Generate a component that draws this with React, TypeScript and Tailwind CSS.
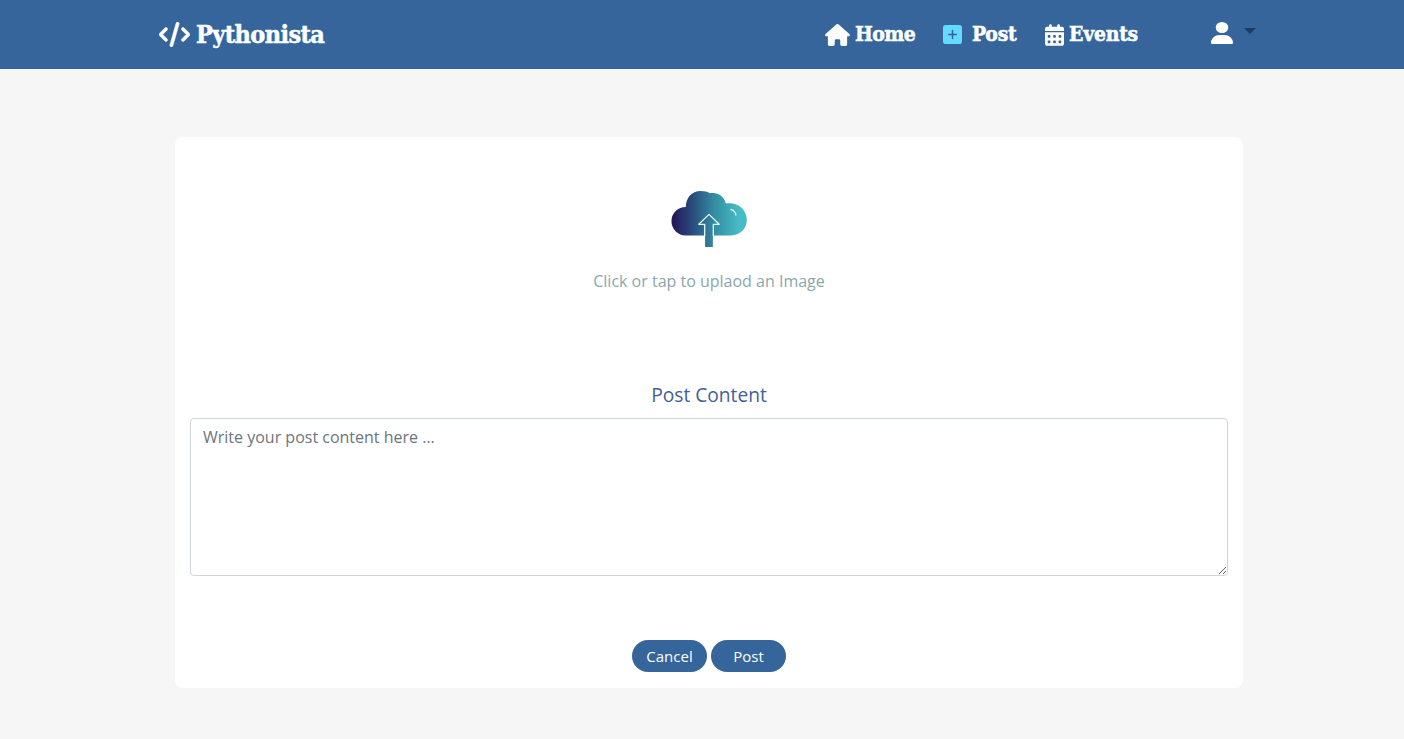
import { FaCalendarDays, FaCode, FaHouse, FaUser } from "react-icons/fa6";

const brandFont =
  "font-['DejaVu_Serif_Condensed','DejaVu_Serif',serif] font-bold text-white [-webkit-text-stroke:0.5px_white]";

function PlusIcon() {
  return (
    <svg width="19" height="19" viewBox="0 0 19 19" className="block">
      <rect width="19" height="19" rx="2.8" fill="#63dafe" />
      <path d="M9.5 5.6v7.8M5.6 9.5h7.8" stroke="#2f6399" strokeWidth="1.5" strokeLinecap="round" />
    </svg>
  );
}

function UploadCloud() {
  return (
    <svg width="76" height="58" viewBox="0 0 76 58" className="block">
      <defs>
        <linearGradient id="cloud" x1="0" x2="76" y1="0" y2="0" gradientUnits="userSpaceOnUse">
          <stop offset="0.03" stopColor="#25175a" />
          <stop offset="0.28" stopColor="#294b7c" />
          <stop offset="0.58" stopColor="#358ea5" />
          <stop offset="0.9" stopColor="#45bdc6" />
        </linearGradient>
      </defs>
      <path
        d="M14.6 45.4A14.25 14.25 0 0 1 14.8 16.9C14.8 8 20.8 1 29.5 1C33.5 1 36.7 1.9 39 3.3C45.5 1.6 53 5.2 54.9 13.5C66.5 11.4 75.8 19.5 75.8 29.8C75.8 38.8 69 45.4 60 45.4Z"
        fill="url(#cloud)"
      />
      <path d="M33 44h9.6v3.5H33z" fill="white" />
      <path d="M34.1 57V34H28L38 24.4 48 34h-6.1v23z" fill="url(#cloud)" />
      <path d="M33.7 46V34.3h-5.9L38 24.4l10.2 9.9h-5.9V46" fill="none" stroke="#e2f8fc" strokeWidth="1.3" strokeLinejoin="round" />
      <path d="M60 19.5q2.7.4 4 3M64.6 23.2l.2 1.8" fill="none" stroke="#d5f8fa" strokeWidth="1.3" strokeLinecap="round" />
    </svg>
  );
}

export default function App() {
  return (
    <div className="h-[739px] w-[1404px] overflow-hidden bg-[#f6f6f6] font-['Open_Sans',sans-serif] text-base">
      <nav className="flex h-[69px] items-center bg-[#35659b] pl-[159px]">
        <a href="#" className="flex w-[666px] items-center">
          <FaCode className="h-[25px] w-[31px] stroke-white stroke-[12px] text-white" />
          <span className={`${brandFont} ml-[6px] text-[25px] leading-8 tracking-[-0.6px]`}>Pythonista</span>
        </a>
        <a href="#" className="flex w-[118px] items-center">
          <FaHouse className="h-[22px] w-[25px] text-white" />
          <span className={`${brandFont} ml-[5px] pb-0.5 text-[21px] leading-8 tracking-[-0.55px]`}>Home</span>
        </a>
        <a href="#" className="flex w-[102px] items-center">
          <PlusIcon />
          <span className={`${brandFont} ml-[10px] pb-0.5 text-[21px] leading-8 tracking-[-0.3px]`}>Post</span>
        </a>
        <a href="#" className="flex w-[166px] items-center">
          <FaCalendarDays className="h-[22px] w-[19px] text-white" />
          <span className={`${brandFont} ml-[5px] pb-0.5 text-[21px] leading-8 tracking-[-0.25px]`}>Events</span>
        </a>
        <button aria-label="Account" className="flex items-center pb-[3px]">
          <FaUser preserveAspectRatio="none" className="h-[22px] w-[22px] text-white" />
          <svg width="12" height="6" viewBox="0 0 12 6" className="ml-[11px] -mt-1">
            <path d="M0 0h12L6 6z" fill="#1c3d63" />
          </svg>
        </button>
      </nav>
      <main className="ml-[175px] mt-[68px] flex h-[551px] w-[1068px] flex-col items-center rounded-lg bg-white px-[15px]">
        <button aria-label="Upload" className="mt-[53px]">
          <UploadCloud />
        </button>
        <p className="mt-[21px] leading-6 text-[#8aa7ac]">Click or tap to uplaod an Image</p>
        <label htmlFor="content" className="mt-[88px] text-[19.2px] leading-[28px] text-[#445f94]">Post Content</label>
        <textarea
          id="content"
          placeholder="Write your post content here ..."
          className="mt-[9px] block h-[158px] w-full shrink-0 resize-y rounded border border-[#ced4da] px-3 py-1.5 leading-6 outline-none placeholder:text-[#6c757d]"
        />
        <div className="mt-16 flex gap-1 text-[15px] text-white">
          <button className="h-8 w-[75px] rounded-full bg-[#35659b]">Cancel</button>
          <button className="h-8 w-[75px] rounded-full bg-[#35659b]">Post</button>
        </div>
      </main>
    </div>
  );
}
